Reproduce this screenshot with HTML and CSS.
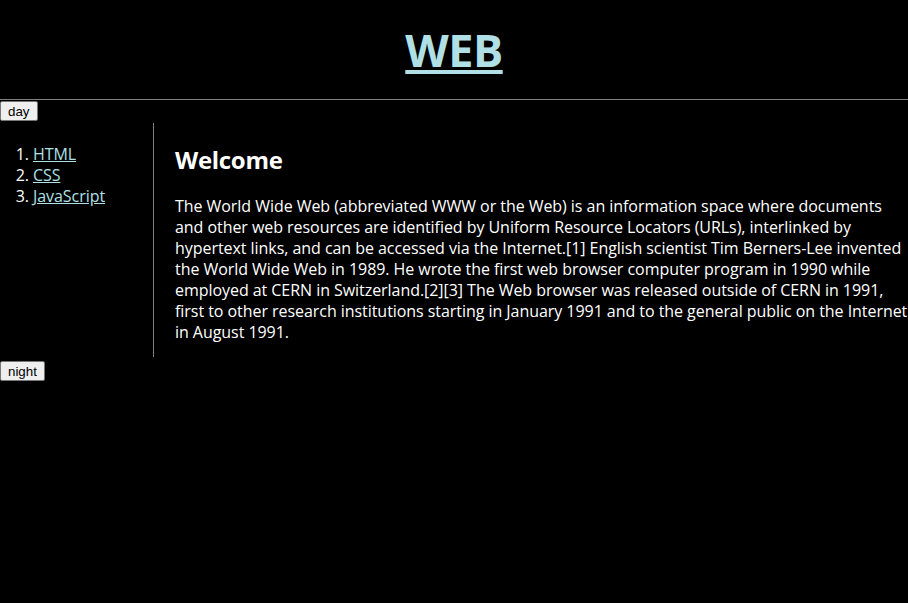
FILE: index.html
```html
<!DOCTYPE html>
<html>
<head>
<meta charset="utf-8">
<title>WEB</title>
<link rel="stylesheet" href="styles.css">
</head>
<body>
<h1 class="title"><a href="#">WEB</a></h1>
<div class="btnrow btnrow-top"><input type="button" class="btn" value="day"></div>
<div class="grid">
  <ol class="nav">
    <li><a href="#">HTML</a></li>
    <li><a href="#">CSS</a></li>
    <li><a href="#">JavaScript</a></li>
  </ol>
  <div class="article">
    <h2 class="heading">Welcome</h2>
    <p class="text">The World Wide Web (abbreviated WWW or the Web) is an information space where documents and other web resources are identified by Uniform Resource Locators (URLs), interlinked by hypertext links, and can be accessed via the Internet.[1] English scientist Tim Berners-Lee invented the World Wide Web in 1989. He wrote the first web browser computer program in 1990 while employed at CERN in Switzerland.[2][3] The Web browser was released outside of CERN in 1991, first to other research institutions starting in January 1991 and to the general public on the Internet in August 1991.</p>
  </div>
</div>
<div class="btnrow btnrow-bottom"><input type="button" class="btn" value="night"></div>
</body>
</html>
```
FILE: styles.css
```css
body {
  margin: 0;
  background: #000;
  color: #fff;
  font-family: "Open Sans", "Noto Sans", sans-serif;
  font-size: 16px;
  line-height: 21px;
  letter-spacing: -0.05px;
}
a { color: powderblue; }
.title {
  font-size: 45px;
  line-height: 59px;
  text-align: center;
  border-bottom: 1px solid gray;
  margin: 0;
  padding: 20px;
  font-weight: bold;
  letter-spacing: -0.5px;
}
.btnrow {
  display: flex;
}
.btnrow-top {
  padding-top: 1px;
  height: 22px;
}
.btnrow-bottom {
  padding-top: 4px;
  height: 21px;
}
.btn {
  margin: 0;
  font-family: Arial, "Liberation Sans", sans-serif;
  font-size: 13.33px;
  letter-spacing: 0;
  height: 20px;
  padding: 0 7px;
  line-height: 15px;
  background: #efefef;
  border: 1px solid #767676;
  border-radius: 2px;
  color: #000;
}
.grid {
  display: grid;
  grid-template-columns: 150px 1fr;
}
.nav {
  border-right: 1px solid gray;
  width: 100px;
  margin: 0;
  padding: 21px 20px 20px 33px;
}
.article {
  padding-left: 25px;
}
.heading {
  font-size: 24px;
  line-height: 33px;
  margin: 20px 0;
  font-weight: bold;
  letter-spacing: -0.3px;
}
.text {
  margin: 16px 0 14px;
}
```
